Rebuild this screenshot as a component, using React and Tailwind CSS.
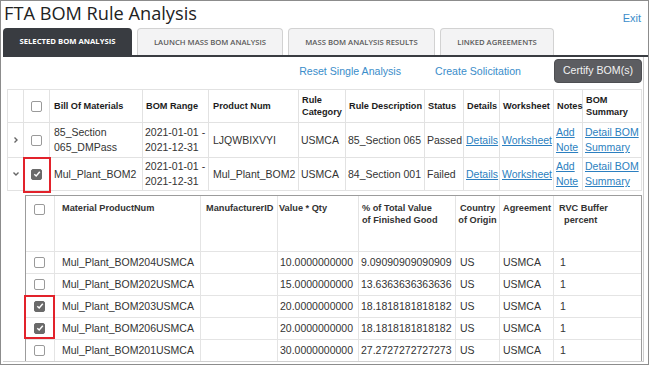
import { Fragment } from 'react';

const LINK = 'text-[#2b7fc0] underline';

function Box({ checked }) {
  return (
    <span
      className={
        'mx-auto flex h-[11px] w-[11px] items-center justify-center rounded-[2px] border ' +
        (checked ? 'border-[#6a6a6a] bg-[#6a6a6a]' : 'border-[#9a9a9a] bg-white')
      }
    >
      {checked ? (
        <svg width="8" height="8" viewBox="0 0 8 8">
          <polyline points="1.3,4.2 3.2,6 6.8,1.8" fill="none" stroke="#fff" strokeWidth="1.5" />
        </svg>
      ) : null}
    </span>
  );
}

const tabs = [
  { label: 'SELECTED BOM ANALYSIS', w: 'w-[129px]', active: true },
  { label: 'LAUNCH MASS BOM ANALYSIS', w: 'w-[146px]' },
  { label: 'MASS BOM ANALYSIS RESULTS', w: 'w-[147px]' },
  { label: 'LINKED AGREEMENTS', w: 'w-[114px]' },
];

const materials = [
  { num: 'Mul_Plant_BOM204USMCA', val: '10.0000000000', pct: '9.09090909090909', checked: false },
  { num: 'Mul_Plant_BOM202USMCA', val: '15.0000000000', pct: '13.6363636363636', checked: false },
  { num: 'Mul_Plant_BOM203USMCA', val: '20.0000000000', pct: '18.1818181818182', checked: true, mark: true },
  { num: 'Mul_Plant_BOM206USMCA', val: '20.0000000000', pct: '18.1818181818182', checked: true },
  { num: 'Mul_Plant_BOM201USMCA', val: '30.0000000000', pct: '27.2727272727273', checked: false },
];

const th =
  'whitespace-nowrap border border-[#e2e2e2] px-[3px] align-middle text-left text-[9.2px] font-bold leading-[12px] text-[#1c1c1c]';
const td = 'whitespace-nowrap border border-[#e2e2e2] px-[2px] align-middle text-[10.5px] leading-[15px] text-[#333]';
const sth =
  'whitespace-nowrap border-r border-b border-[#e4e4e4] align-top pt-[6px] text-left text-[9.2px] font-bold leading-[12px] text-[#333]';
const std = 'whitespace-nowrap border-r border-b border-[#e4e4e4] align-middle text-[10.5px] leading-[14px] text-[#333]';

function SubTable() {
  return (
    <div className="border border-[#9c9c9c]">
      <table className="w-[615px] table-fixed border-collapse">
        <colgroup>
          <col className="w-[29px]" />
          <col className="w-[146px]" />
          <col className="w-[77px]" />
          <col className="w-[81px]" />
          <col className="w-[97px]" />
          <col className="w-[44px]" />
          <col className="w-[54px]" />
          <col className="w-[87px]" />
        </colgroup>
        <thead>
          <tr className="h-[55px]">
            <th className={sth + ' pt-[8px]'}>
              <Box />
            </th>
            <th className={sth + ' pl-[7px]'}>Material ProductNum</th>
            <th className={sth + ' pl-[5px]'}>ManufacturerID</th>
            <th className={sth + ' pl-[1px]'}>Value * Qty</th>
            <th className={sth + ' pl-[3px]'}>
              % of Total Value
              <br />
              of Finished Good
            </th>
            <th className={sth + ' text-center'}>
              <span className="block text-center">
                Country
                <br />
                of Origin
              </span>
            </th>
            <th className={sth + ' pl-[3px]'}>Agreement</th>
            <th className={sth + ' border-r-0 pl-[5px]'}>
              RVC Buffer
              <br />
              {'\u00a0\u00a0percent'}
            </th>
          </tr>
        </thead>
        <tbody>
          {materials.map((m, i) => {
            const last = i === materials.length - 1 ? ' border-b-0' : '';
            return (
              <tr key={m.num} className="h-[22px]">
                <td className={std + ' relative' + last}>
                  <Box checked={m.checked} />
                  {m.mark ? (
                    <div className="absolute left-[-2px] top-[-1px] z-10 h-[44px] w-[31px] border-2 border-[#e2222b]" />
                  ) : null}
                </td>
                <td className={std + ' pl-[7px]' + last}>{m.num}</td>
                <td className={std + last} />
                <td className={std + ' pl-[2px]' + last}>{m.val}</td>
                <td className={std + ' pl-[2px]' + last}>{m.pct}</td>
                <td className={std + ' pl-[4px]' + last}>US</td>
                <td className={std + ' pl-[3px]' + last}>USMCA</td>
                <td className={std + ' border-r-0 pl-[6px]' + last}>1</td>
              </tr>
            );
          })}
        </tbody>
      </table>
    </div>
  );
}

function Chevron({ down }) {
  return (
    <svg width="8" height="8" viewBox="0 0 8 8" className="mx-auto">
      {down ? (
        <polyline points="1.5,2.5 4,5 6.5,2.5" fill="none" stroke="#666" strokeWidth="1.4" />
      ) : (
        <polyline points="2.5,1.5 5,4 2.5,6.5" fill="none" stroke="#666" strokeWidth="1.4" />
      )}
    </svg>
  );
}

export default function App() {
  return (
    <div className="h-[365px] w-[649px] overflow-hidden border border-[#8c8c8c] bg-white font-['Liberation_Sans',Arial,sans-serif]">
      <div className="flex h-[27px] items-start justify-between pl-[3px] pr-[7px]">
        <h1 className="pt-[1px] font-['Open_Sans',sans-serif] text-[18.2px] leading-[22px] text-[#222]">
          FTA BOM Rule Analysis
        </h1>
        <a className="pt-[10px] text-[11px] leading-[14px] text-[#3a8dca]">Exit</a>
      </div>

      <div className="flex h-[27px] items-end gap-[5px] pl-[2px]">
        {tabs.map((t) => (
          <div
            key={t.label}
            className={
              t.w +
              " flex h-[27px] items-center justify-center rounded-t-[4px] pt-[1px] font-['Open_Sans',sans-serif] text-[7.7px] " +
              (t.active
                ? 'bg-[#393c41] font-bold text-white'
                : 'border border-b-0 border-[#d2d2d2] bg-[#f3f3f4] font-semibold text-[#5a5a5a]')
            }
          >
            {t.label}
          </div>
        ))}
      </div>
      <div className="ml-[2px] h-[2px] bg-[#393c41]" />

      <div className="ml-[2px] mr-[4px] h-[305px] overflow-hidden border-b border-r border-[#cfcfcf] pl-[4px] pr-[1px]">
        <div className="flex h-[32px] items-start justify-end pt-[2px]">
          <a className="mr-[34px] pt-[5px] text-[10.6px] leading-[14px] text-[#3a8dca]">Reset Single Analysis</a>
          <a className="mr-[33px] pt-[5px] text-[10.6px] leading-[14px] text-[#3a8dca]">Create Solicitation</a>
          <button className="h-[24px] w-[88px] rounded-[4px] border border-[#4d4e52] bg-[#5c5d61] text-[10.6px] text-[#f2f2f2]">
            Certify BOM(s)
          </button>
        </div>

        <table className="w-[634px] table-fixed border-collapse">
          <colgroup>
            <col className="w-[16px]" />
            <col className="w-[26px]" />
            <col className="w-[93px]" />
            <col className="w-[66px]" />
            <col className="w-[90px]" />
            <col className="w-[47px]" />
            <col className="w-[79px]" />
            <col className="w-[39px]" />
            <col className="w-[36px]" />
            <col className="w-[54px]" />
            <col className="w-[29px]" />
            <col className="w-[59px]" />
          </colgroup>
          <thead>
            <tr className="h-[33px]">
              <th className={th} />
              <th className={th}>
                <Box />
              </th>
              <th className={th + ' pl-[4px]'}>Bill Of Materials</th>
              <th className={th}>BOM Range</th>
              <th className={th + ' pl-[4px]'}>Product Num</th>
              <th className={th}>
                Rule
                <br />
                Category
              </th>
              <th className={th}>Rule Description</th>
              <th className={th}>Status</th>
              <th className={th + ' px-[2px]'}>Details</th>
              <th className={th + ' px-[2px]'}>Worksheet</th>
              <th className={th + ' px-[2px]'}>Notes</th>
              <th className={th + ' px-[2px]'}>
                BOM
                <br />
                Summary
              </th>
            </tr>
          </thead>
          <tbody>
            {[
              { bom: ['85_Section', '065_DMPass'], prod: 'LJQWBIXVYI', desc: '85_Section 065', status: 'Passed' },
              { bom: ['Mul_Plant_BOM2'], prod: 'Mul_Plant_BOM2', desc: '84_Section 001', status: 'Failed', open: true },
            ].map((r) => (
              <Fragment key={r.prod}>
                <tr className={r.open ? 'h-[33px]' : 'h-[35px]'}>
                  <td className={td}>
                    <Chevron down={r.open} />
                  </td>
                  <td className={td + ' relative'}>
                    <Box checked={r.open} />
                    {r.open ? (
                      <div className="absolute left-[-1px] top-[-1px] bottom-[-3px] right-[-2px] z-10 border-2 border-[#e2222b]" />
                    ) : null}
                  </td>
                  <td className={td + ' pl-[4px]'}>
                    {r.bom.map((b, i) => (
                      <Fragment key={b}>
                        {i > 0 ? <br /> : null}
                        {b}
                      </Fragment>
                    ))}
                  </td>
                  <td className={td}>
                    2021-01-01 -
                    <br />
                    2021-12-31
                  </td>
                  <td className={td + ' pl-[4px]'}>{r.prod}</td>
                  <td className={td}>USMCA</td>
                  <td className={td}>{r.desc}</td>
                  <td className={td}>{r.status}</td>
                  <td className={td}>
                    <a className={LINK}>Details</a>
                  </td>
                  <td className={td}>
                    <a className={LINK}>Worksheet</a>
                  </td>
                  <td className={td}>
                    <a className={LINK}>
                      Add
                      <br />
                      Note
                    </a>
                  </td>
                  <td className={td}>
                    <a className={LINK}>
                      Detail BOM
                      <br />
                      Summary
                    </a>
                  </td>
                </tr>
                {r.open ? (
                  <tr>
                    <td colSpan={12} className="border-t border-[#e2e2e2] pl-[17px] pt-[4px] align-top">
                      <SubTable />
                    </td>
                  </tr>
                ) : null}
              </Fragment>
            ))}
          </tbody>
        </table>
      </div>
    </div>
  );
}
